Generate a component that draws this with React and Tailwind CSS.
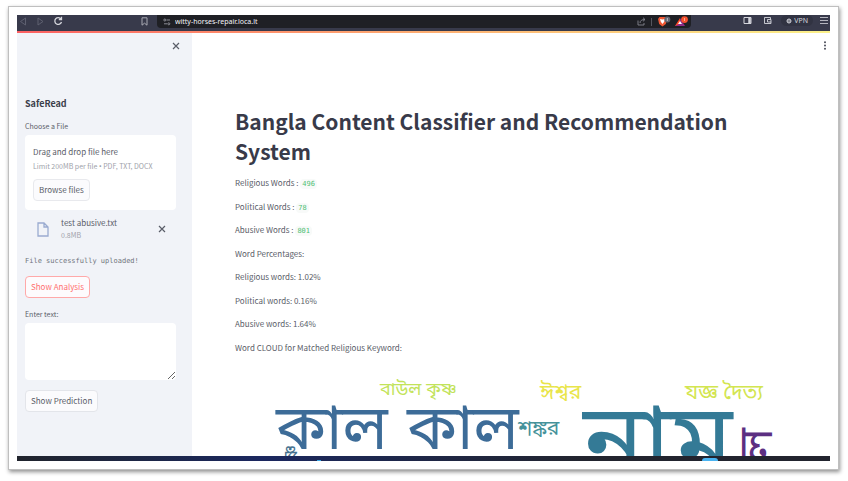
import React from "react";

const counts = [
  { label: "Religious Words :", value: 496 },
  { label: "Political Words :", value: 78 },
  { label: "Abusive Words :", value: 801 },
];

const lines = [
  "Word Percentages:",
  "Religious words: 1.02%",
  "Political words: 0.16%",
  "Abusive words: 1.64%",
  "Word CLOUD for Matched Religious Keyword:",
];

function BrowserBar() {
  return (
    <header className="flex h-4 shrink-0 items-start bg-[#383a4b] text-[#d5d6dc]">
      <div className="flex w-[140px] shrink-0 items-center pl-[2px] pt-px">
        <button aria-label="Back" className="text-[#5e6070]">
          <svg className="size-[9px]" viewBox="0 0 9 9" fill="none" stroke="currentColor"><path d="M6.500 1 1.500 4.500l5 3.500z" /></svg>
        </button>
        <button aria-label="Forward" className="ml-2 text-[#5e6070]">
          <svg className="size-[9px]" viewBox="0 0 9 9" fill="none" stroke="currentColor"><path d="m2 1 5 3.500-5 3.500z" /></svg>
        </button>
        <button aria-label="Reload" className="ml-2">
          <svg className="size-[10px]" viewBox="0 0 10 10" fill="none" stroke="currentColor" strokeWidth="1.300"><path d="M8 3A3.400 3.400 0 1 0 8.500 6M8.500 .8v2.700H5.800" /></svg>
        </button>
        <button aria-label="Bookmark" className="ml-auto mr-2 text-[#a9aab4]">
          <svg className="size-[9px]" viewBox="0 0 9 9" fill="none" stroke="currentColor"><path d="M2 .8h5v7.400L4.500 6.200 2 8.200z" /></svg>
        </button>
      </div>
      <div className="flex h-[13px] min-w-0 flex-1 items-center rounded-b bg-[#1f2025] pl-[6px] pr-[2px]">
        <label htmlFor="address" className="sr-only">Address</label>
        <svg className="size-2 shrink-0 text-[#8b8c94]" viewBox="0 0 8 8" fill="none" stroke="currentColor"><circle cx="1.800" cy="2" r="1" /><path d="M3.500 2H7M1 5.800h3" /><circle cx="5.800" cy="5.800" r="1" /></svg>
        <input id="address" defaultValue="witty-horses-repair.loca.lt" readOnly className="h-3 min-w-0 flex-1 bg-transparent pl-1 font-['Noto_Sans','Liberation_Sans',sans-serif] text-[7px] text-[#f4f4f8] outline-none" />
        <button aria-label="Share" className="text-[#85868e]">
          <svg className="size-[9px]" viewBox="0 0 9 9" fill="none" stroke="currentColor" strokeWidth=".9"><path d="M1 3.500V8h6V6M3 6c0-2.500 2-3.500 5-3.500M6 .7l2 1.800-2 1.800" /></svg>
        </button>
        <span className="mx-[5px] h-2 w-px bg-[#55565e]" />
        <button aria-label="Shields">
          <svg className="h-[11px] w-[14px]" viewBox="0 0 14 11"><path d="M2.500 1h6L10 3 8.800 8 5.500 10.600 2.200 8 1 3z" fill="#ee5733" /><path d="m3 3 2.500.6L8 3 7.200 5.700 5.500 8 3.800 5.700z" fill="#fff" /><circle cx="10.300" cy="3.400" r="3" fill="#626570" /><path d="M10.300 2v3" stroke="#d8d8dc" strokeWidth=".8" /></svg>
        </button>
        <button aria-label="Rewards" className="ml-1">
          <svg className="h-[11px] w-[14px]" viewBox="0 0 14 11"><path d="M5 2 0 10h5z" fill="#ff4a24" /><path d="m5 2 5 8H0l5-2.500z" fill="#8f2b87" /><path d="m5 5 2 3H3z" fill="#fff" /><circle cx="9.500" cy="3.600" r="3.400" fill="#f5512f" /><path d="M9.500 2v3" stroke="#ffc0ad" strokeWidth=".8" /></svg>
        </button>
      </div>
      <div className="flex shrink-0 items-center pl-[52px] pr-[2px]">
        <button aria-label="Sidebar">
          <svg className="h-[11px] w-[9px]" viewBox="0 0 9 11" fill="none" stroke="currentColor"><path d="M1 2.500h7v6H1z" /><path d="M6.500 2.500v6" strokeWidth="2.500" /></svg>
        </button>
        <button aria-label="Wallet" className="ml-[11px]">
          <svg className="h-[11px] w-[9px]" viewBox="0 0 9 11" fill="none" stroke="currentColor" strokeWidth=".9"><path d="M1.500 2.500h6v2M1.500 2.500v6h6.500v-4H4.500v2.500H8" /></svg>
        </button>
        <button className="ml-[9px] flex h-[11px] items-center gap-[2px] rounded-full bg-[#313342] px-[5px] font-['Noto_Sans','Liberation_Sans',sans-serif] text-[7px] leading-none">
          <svg className="size-[6px]" viewBox="0 0 6 6" fill="none" stroke="currentColor"><circle cx="3" cy="3" r="2" /><path d="M1 3h4M3 1v4" strokeWidth=".6" /></svg>
          VPN
        </button>
        <button aria-label="Menu" className="ml-[7px] text-[#b4b5be]">
          <svg className="h-[11px] w-[8px]" viewBox="0 0 8 11" stroke="currentColor"><path d="M0 2.500h8M0 5.500h8M0 8.500h8" /></svg>
        </button>
      </div>
    </header>
  );
}

function Cross() {
  return (
    <svg className="size-2" viewBox="0 0 8 8" stroke="currentColor" strokeWidth="1.200"><path d="m1 1 6 6M7 1 1 7" /></svg>
  );
}

function Sidebar() {
  return (
    <aside className="flex w-[175px] shrink-0 flex-col items-start bg-[#f1f3f8] pl-2 pr-4">
      <button aria-label="Close sidebar" className="-mr-1 mt-[9px] self-end"><Cross /></button>
      <h2 className="mt-[46px] text-[9px] font-bold leading-4 text-[#3b3e4b]">SafeRead</h2>
      <label htmlFor="file" className="mt-2 text-[7px] leading-3">Choose a File</label>
      <section className="mt-[3px] flex w-full flex-col items-start rounded bg-white px-2 pb-[9px] pt-[10px]">
        <p className="text-[8px] leading-[14px]">Drag and drop file here</p>
        <p className="text-[7px] leading-[14px] text-[#a0a2aa]">Limit 200MB per file <span className="font-['Noto_Sans',sans-serif]">•</span> PDF, TXT, DOCX</p>
        <button id="file" className="mt-[5px] h-[22px] rounded border border-[#e8e9ed] bg-[#fbfbfd] px-[5px] text-[8px]">Browse files</button>
      </section>
      <div className="mt-[7px] flex w-full items-center pl-3 pr-[10px]">
        <svg className="h-[15px] w-3 text-[#9aabd0]" viewBox="0 0 12 15" fill="none" stroke="currentColor" strokeWidth="1.300"><path d="M1 1h6l4 4v9H1zM7 1v4h4" /></svg>
        <div className="ml-3 flex-1">
          <p className="text-[8px] leading-3">test abusive.txt</p>
          <p className="text-[7px] leading-3 text-[#a0a2aa]">0.8MB</p>
        </div>
        <button aria-label="Remove file"><Cross /></button>
      </div>
      <p className="mt-[14px] font-['DejaVu_Sans_Mono','Liberation_Mono',monospace] text-[7px] leading-3 text-[#70737c]">File successfully uploaded!</p>
      <button className="mt-[9px] h-[22px] rounded border border-[#ffa9a9] bg-[#fdfbfd] px-[5px] text-[8px] text-[#ff7070]">Show Analysis</button>
      <label htmlFor="text" className="mt-[10px] text-[7px] leading-3">Enter text:</label>
      <textarea id="text" className="mt-[3px] h-[57px] w-full resize rounded bg-white p-1 text-[8px] outline-none" />
      <button className="mt-[10px] h-[22px] rounded border border-[#e3e5ea] bg-[#fbfbfd] px-[5px] text-[8px]">Show Prediction</button>
    </aside>
  );
}

function WordCloud() {
  return (
    <svg className="mt-5 block w-full shrink-0 font-['Noto_Sans_Bengali','Noto_Sans','Noto_Sans_CJK_SC',sans-serif]" viewBox="0 0 552 180" role="img" aria-label="Religious word cloud">
      <text x="145" y="19" fontSize="18" fill="#c2e35a">বাউল কৃষ্ণ</text>
      <text x="305" y="23" fontSize="21" fill="#e9e54a">ঈশ্বর</text>
      <text x="450" y="23" fontSize="21" fill="#d3e550">যজ্ঞ দৈত্য</text>
      <text x="41" y="73" fontSize="62" fill="#3d6c98">কাল</text>
      <text x="172" y="73" fontSize="62" fill="#3d6c98">কাল</text>
      <text x="283" y="59" fontSize="21" fill="#45929a">শঙ্কর</text>
      <text x="348" y="99" fontSize="101" fill="#347a96">নাম</text>
      <text transform="translate(537 52) rotate(-90)" textAnchor="end" fontSize="48" fill="#5c2f82">কাল</text>
      <text transform="translate(62 69) rotate(-90)" textAnchor="end" fontSize="19" fill="#477391">কৃষ্ণ</text>
    </svg>
  );
}

export default function App() {
  return (
    <div className="flex h-screen bg-white pb-[11px] pl-2 pr-[9px] pt-[6px] font-['Noto_Sans_CJK_SC','Noto_Sans',sans-serif] text-[#5a5d68]">
      <div className="flex min-w-0 flex-1 flex-col border border-[#bfbfbf] bg-white p-2 shadow-[1px_2px_4px_#00000070]">
        <BrowserBar />
        <div className="h-[2px] shrink-0 bg-linear-to-r from-[#fb5f62] via-[#fdad72] to-[#fbf18a]" />
        <div className="flex min-h-0 flex-1 overflow-hidden">
          <Sidebar />
          <main className="flex min-w-0 flex-1 flex-col px-[43px]">
            <button aria-label="Main menu" className="-mr-10 mt-2 self-end">
              <svg className="h-[9px] w-1" viewBox="0 0 4 9" fill="#4b4e5a"><circle cx="2" cy="1.200" r="1" /><circle cx="2" cy="4.500" r="1" /><circle cx="2" cy="7.800" r="1" /></svg>
            </button>
            <h1 className="mt-14 text-[21px] font-bold leading-[30px] text-[#383a49]">Bangla Content Classifier and Recommendation System</h1>
            <div className="mt-[9px] flex h-[181px] shrink-0 flex-col justify-between text-[8px] leading-4">
              {counts.map((c) => (
                <p key={c.label} className="h-4">
                  {c.label} <code className="rounded-sm bg-[#f8faf9] px-[2px] py-px font-['DejaVu_Sans_Mono','Liberation_Mono',monospace] text-[7px] leading-none text-[#4fc074]">{c.value}</code>
                </p>
              ))}
              {lines.map((l) => <p key={l} className="h-4">{l}</p>)}
            </div>
            <WordCloud />
          </main>
        </div>
        <footer className="flex h-[5px] shrink-0 items-end bg-linear-to-r from-[#20232c] via-[#1b275f] via-30% to-[#22242e] to-70% pl-[300px]">
          <span className="h-px w-1 bg-[#39a9e8]" />
          <span className="ml-auto mr-[112px] h-[3px] w-4 rounded-t-sm bg-[#49b3f1]" />
        </footer>
      </div>
    </div>
  );
}
